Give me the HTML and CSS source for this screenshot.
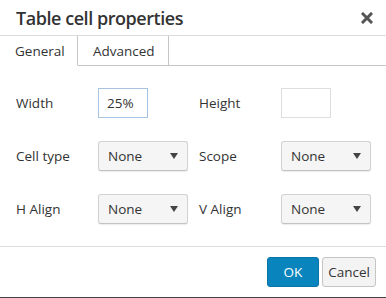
FILE: index.html
```html
<!DOCTYPE html>
<html lang="en">
<head>
    <meta charset="UTF-8">
    <title>Table cell properties</title>
    <link rel="stylesheet" href="styles.css">
</head>
<body>
    <div class="dialog">
        <div class="head">
            <span class="title">Table cell properties</span>
            <button class="close" aria-label="Close">
                <svg width="12" height="12" viewBox="0 0 12 12">
                    <path d="M2 2 L10 10 M10 2 L2 10" stroke="#555" stroke-width="3" stroke-linecap="square"/>
                </svg>
            </button>
        </div>

        <div class="tabs">
            <div class="tab active">General</div>
            <div class="tab">Advanced</div>
            <div class="tab-rest"></div>
        </div>

        <!-- Campos del formulario -->
        <div class="form">
            <label class="lbl">Width</label>
            <input class="field focus" type="text" value="25%">
            <label class="lbl">Height</label>
            <input class="field" type="text" value="">

            <label class="lbl">Cell type</label>
            <div class="listbox"><span>None</span><i class="caret"></i></div>
            <label class="lbl">Scope</label>
            <div class="listbox"><span>None</span><i class="caret"></i></div>

            <label class="lbl">H Align</label>
            <div class="listbox"><span>None</span><i class="caret"></i></div>
            <label class="lbl">V Align</label>
            <div class="listbox"><span>None</span><i class="caret"></i></div>
        </div>

        <div class="foot">
            <button class="btn primary">OK</button>
            <button class="btn cancel">Cancel</button>
        </div>
    </div>
</body>
</html>
```

FILE: styles.css
```css
body {
    margin: 0;
    font-family: "Open Sans", "Noto Sans", Arial, sans-serif;
    color: #333;
    background-color: #fff;
}
.dialog {
    width: 386px;
    height: 298px;
    box-sizing: border-box;
    border-bottom: 1px solid #444;
    display: flex;
    flex-direction: column;
}
.head {
    height: 35px;
    border-bottom: 1px solid #dcdcdc;
    display: flex;
    align-items: center;
    justify-content: space-between;
    padding: 0 13px 0 16px;
}
.title {
    font-size: 18px;
    font-weight: 600;
    letter-spacing: -0.45px;
    color: #333;
}
.close {
    border: none;
    background: none;
    padding: 0;
    width: 12px;
    height: 12px;
    display: flex;
}
.tabs {
    display: flex;
    height: 30px;
}
.tab {
    box-sizing: border-box;
    height: 30px;
    padding: 6px 15px 0;
    font-size: 13.5px;
    border-right: 1px solid #c5c5c5;
    border-bottom: 1px solid #c5c5c5;
}
.tab.active {
    width: 78px;
    border-bottom-color: #fff;
}
.tab:nth-child(2) {
    width: 91px;
}
.tab-rest {
    flex: 1;
    border-bottom: 1px solid #c5c5c5;
}
.form {
    display: grid;
    grid-template-columns: 82px 101px 82px 90px;
    grid-auto-rows: 30px;
    row-gap: 23px;
    align-items: center;
    padding: 22px 0 0 16px;
}
.lbl {
    font-size: 13.5px;
}
.field {
    box-sizing: border-box;
    width: 50px;
    height: 30px;
    border: 1px solid #dedede;
    padding: 0 8px;
    font-family: inherit;
    font-size: 13.5px;
    color: #333;
    outline: none;
}
.field.focus {
    border-color: #a6c3e2;
}
.listbox {
    box-sizing: border-box;
    width: 90px;
    height: 30px;
    border: 1px solid #d2d2d2;
    border-bottom-color: #c2c2c2;
    border-radius: 3px;
    background-color: #f5f5f5;
    box-shadow: 0 1px 1px rgba(0,0,0,0.08);
    display: flex;
    align-items: center;
    justify-content: space-between;
    padding: 0 9px 0 9px;
    font-size: 13.5px;
}
.caret {
    width: 0;
    height: 0;
    border-left: 4px solid transparent;
    border-right: 4px solid transparent;
    border-top: 6px solid #444;
}
.foot {
    margin-top: auto;
    height: 50px;
    border-top: 1px solid #dcdcdc;
    display: flex;
    justify-content: flex-end;
    align-items: center;
    gap: 3px;
    padding: 0 10px 0 0;
}
.btn {
    box-sizing: border-box;
    height: 30px;
    padding: 0;
    border: 1px solid #c5c5c5;
    border-radius: 3px;
    background-color: #f3f3f3;
    font-family: inherit;
    font-size: 13.5px;
    color: #333;
}
.btn.primary {
    width: 52px;
    background-color: #0a84bd;
    border-color: #0a74a8;
    color: #fff;
}
.btn.cancel {
    width: 54px;
}
```
